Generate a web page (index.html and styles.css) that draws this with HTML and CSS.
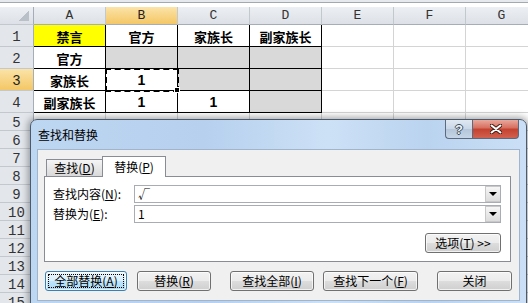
FILE: index.html
```html
<!DOCTYPE HTML>
<html lang="zh-CN">
<head>
	<meta charset="UTF-8">
	<title>查找和替换</title>
    <link rel="stylesheet" href="styles.css">
</head>
<body>
    <div class="strip"></div>
    <div class="sheet">
        <div class="row head">
            <div class="corner"></div>
            <div>A</div><div class="on">B</div><div>C</div><div>D</div><div>E</div><div>F</div><div>G</div>
        </div>
        <div class="row big">
            <div class="rh">1</div>
            <div class="k yellow">禁言</div><div class="k">官方</div><div class="k">家族长</div><div class="k">副家族长</div><div></div><div></div><div></div>
        </div>
        <div class="row big">
            <div class="rh">2</div>
            <div class="k">官方</div><div class="k g"></div><div class="k g"></div><div class="k g"></div><div></div><div></div><div></div>
        </div>
        <div class="row big">
            <div class="rh on">3</div>
            <div class="k">家族长</div><div class="k num sel">1</div><div class="k g"></div><div class="k g"></div><div></div><div></div><div></div>
        </div>
        <div class="row big">
            <div class="rh">4</div>
            <div class="k">副家族长</div><div class="k num">1</div><div class="k num">1</div><div class="k g"></div><div></div><div></div><div></div>
        </div>
        <div class="row"><div class="rh">5</div><div></div><div></div><div></div><div></div><div></div><div></div><div></div></div>
        <div class="row"><div class="rh">6</div><div></div><div></div><div></div><div></div><div></div><div></div><div></div></div>
        <div class="row"><div class="rh">7</div><div></div><div></div><div></div><div></div><div></div><div></div><div></div></div>
        <div class="row"><div class="rh">8</div><div></div><div></div><div></div><div></div><div></div><div></div><div></div></div>
        <div class="row"><div class="rh">9</div><div></div><div></div><div></div><div></div><div></div><div></div><div></div></div>
        <div class="row"><div class="rh">10</div><div></div><div></div><div></div><div></div><div></div><div></div><div></div></div>
        <div class="row"><div class="rh">11</div><div></div><div></div><div></div><div></div><div></div><div></div><div></div></div>
        <div class="row"><div class="rh">12</div><div></div><div></div><div></div><div></div><div></div><div></div><div></div></div>
        <div class="row"><div class="rh">13</div><div></div><div></div><div></div><div></div><div></div><div></div><div></div></div>
        <div class="row"><div class="rh">14</div><div></div><div></div><div></div><div></div><div></div><div></div><div></div></div>
        <div class="row"><div class="rh">15</div><div></div><div></div><div></div><div></div><div></div><div></div><div></div></div>
    </div>

    <div class="dialog">
        <div class="titlebar">
            <span class="title">查找和替换</span>
            <div class="caption">
                <span class="help">?</span>
                <span class="close">
                    <svg width="12" height="10" viewBox="0 0 12 10">
                        <path d="M1.5 1.5 L10.5 8.5 M10.5 1.5 L1.5 8.5" stroke="#4a1f17" stroke-width="4" stroke-linecap="round"/>
                        <path d="M1.5 1.5 L10.5 8.5 M10.5 1.5 L1.5 8.5" stroke="#fff" stroke-width="2" stroke-linecap="round"/>
                    </svg>
                </span>
            </div>
        </div>
        <div class="client">
            <div class="tabs">
                <span class="tab">查找(<u>D</u>)</span>
                <span class="tab active">替换(<u>P</u>)</span>
            </div>
            <div class="panel">
                <div class="field">
                    <label>查找内容(<u>N</u>):</label>
                    <div class="combo"><span>√</span><i class="drop"></i></div>
                </div>
                <div class="field second">
                    <label>替换为(<u>E</u>):</label>
                    <div class="combo"><span>1</span><i class="drop"></i></div>
                </div>
                <div class="opts">
                    <span class="btn options">选项(<u>T</u>) &gt;&gt;</span>
                </div>
            </div>
            <div class="buttons">
                <span class="btn default b1"><span class="focus">全部替换(<u>A</u>)</span></span>
                <span class="btn b2">替换(<u>R</u>)</span>
                <span class="btn b3">查找全部(<u>I</u>)</span>
                <span class="btn b4">查找下一个(<u>F</u>)</span>
                <span class="btn b5">关闭</span>
            </div>
        </div>
    </div>
</body>
</html>
```

FILE: styles.css
```css
body {
    margin: 0;
    width: 528px;
    height: 303px;
    overflow: hidden;
    position: relative;
    background: #fff;
    font-family: "Noto Sans CJK SC", sans-serif;
}
.strip {
    height: 7px;
    background: linear-gradient(#e6e9ee 0 2px, #a3a9b0 2px 3px, #fff 3px);
}
.row {
    display: flex;
    height: 18px;
}
.row.big {
    height: 22px;
}
.row > div {
    flex: none;
    width: 72px;
    box-sizing: border-box;
    border-right: 1px solid #d4d4d4;
    border-bottom: 1px solid #d4d4d4;
    display: flex;
    align-items: center;
    justify-content: center;
    font-size: 13px;
    font-weight: bold;
    color: #000;
}
.row > .rh,
.row > .corner {
    width: 34px;
    background: #e3e7ec;
    border-right-color: #a5adb8;
    border-bottom-color: #c3c8cf;
    font-family: "Liberation Mono", monospace;
    font-weight: normal;
    font-size: 14px;
    color: #333;
    padding-top: 2px;
}
.head > div {
    background: linear-gradient(#eceff3, #dde1e7);
    border-right-color: #c3c8cf;
    border-bottom-color: #a5adb8;
    font-family: "Liberation Mono", monospace;
    font-weight: normal;
    font-size: 13px;
    color: #333;
}
.row > .corner {
    padding: 0;
    background: linear-gradient(135deg, transparent 50%, #b9c0c8 50%) no-repeat right 4px bottom 3px / 10px 10px,
                linear-gradient(#eceff3, #dde1e7);
}
.row > .on {
    background: linear-gradient(#fbe3a8, #f4c765);
    color: #222;
}
.row > .k {
    border-right-color: #000;
    border-bottom-color: #000;
    padding-top: 1px;
}
.row > .yellow {
    background: #ffff00;
}
.row > .g {
    background: #d9d9d9;
}
.row > .num {
    font-family: "Liberation Sans", sans-serif;
    font-size: 14px;
}
.row > .sel {
    position: relative;
    outline: 2px dashed #000;
    outline-offset: -1px;
}
.sel::after {
    content: "";
    position: absolute;
    right: -3px;
    bottom: -3px;
    width: 4px;
    height: 4px;
    background: #000;
    border: 1px solid #fff;
}

/* dialog */
.dialog {
    position: absolute;
    left: 30px;
    top: 119px;
    width: 497px;
    height: 192px;
    box-sizing: border-box;
    border: 1px solid #4b5a6c;
    border-radius: 7px 7px 0 0;
    background: linear-gradient(to right, #bdd6f1, #b6d0ee 35%, #cde1f6 60%, #bad3ef 80%, #cbe0f6);
    box-shadow: 0 0 7px 2px rgba(0, 0, 0, .35);
}
.titlebar {
    height: 29px;
    display: flex;
    justify-content: space-between;
    align-items: flex-start;
    padding-left: 7px;
}
.title {
    font-size: 12px;
    line-height: 29px;
    color: #000;
}
.caption {
    display: flex;
    margin-right: 7px;
}
.help,
.close {
    height: 19px;
    box-sizing: border-box;
    border: 1px solid #5b6a7c;
    border-top: none;
    display: flex;
    align-items: center;
    justify-content: center;
}
.help {
    width: 27px;
    border-right: none;
    border-radius: 0 0 0 4px;
    background: linear-gradient(#dfe8f2, #c7d6e6 50%, #b5c6da 51%, #c6d6e8);
    font-family: "Liberation Sans", sans-serif;
    font-weight: bold;
    font-size: 13px;
    color: #eef2f6;
    text-shadow: 1px 0 #3c4b5c, -1px 0 #3c4b5c, 0 1px #3c4b5c, 0 -1px #3c4b5c;
}
.close {
    width: 47px;
    border-radius: 0 0 4px 0;
    background: linear-gradient(#e9a89c, #d66e5e 45%, #c3412f 50%, #d2614f);
}
.client {
    margin: 0 6px;
    height: 152px;
    box-sizing: border-box;
    border: 1px solid #a0b5cd;
    background: #f0f0f0;
    padding: 6px 8px 0 6px;
    font-size: 12px;
    color: #000;
}
.tabs {
    display: flex;
    align-items: flex-end;
    height: 20px;
    padding-left: 2px;
}
.tab {
    box-sizing: border-box;
    height: 17px;
    width: 57px;
    border: 1px solid #898c95;
    border-bottom: none;
    background: linear-gradient(#f5f5f5, #d9d9d9);
    display: flex;
    align-items: center;
    justify-content: center;
    line-height: 14px;
}
.tab.active {
    width: 64px;
    height: 21px;
    margin-left: -1px;
    margin-bottom: -1px;
    background: #fff;
    position: relative;
}
.panel {
    height: 86px;
    box-sizing: border-box;
    border: 1px solid #898c95;
    background: #fff;
    padding: 8px 9px 0 8px;
}
.field {
    display: flex;
    align-items: center;
}
.field.second {
    margin-top: 2px;
}
.field label {
    width: 81px;
    flex: none;
    line-height: 14px;
}
.combo {
    flex: 1;
    height: 18px;
    box-sizing: border-box;
    border: 1px solid #a9adb3;
    display: flex;
    align-items: center;
    padding-left: 3px;
    line-height: 14px;
}
.combo span {
    flex: 1;
}
.drop {
    width: 15px;
    height: 16px;
    box-sizing: border-box;
    border: 1px solid #c8c8c8;
    border-right: none;
    background: linear-gradient(#f6f6f6, #dcdcdc);
    display: flex;
    align-items: center;
    justify-content: center;
}
.drop::after {
    content: "";
    border-left: 4px solid transparent;
    border-right: 4px solid transparent;
    border-top: 4px solid #000;
}
.opts {
    display: flex;
    justify-content: flex-end;
    margin-top: 10px;
}
.btn {
    height: 20px;
    box-sizing: border-box;
    border: 1px solid #707070;
    border-radius: 3px;
    background: linear-gradient(#f2f2f2, #ebebeb 50%, #dddddd 51%, #cfcfcf);
    box-shadow: inset 0 0 0 1px rgba(255, 255, 255, .7);
    display: flex;
    align-items: center;
    justify-content: center;
    line-height: 14px;
    flex: none;
}
.options {
    width: 76px;
}
.buttons {
    display: flex;
    margin-top: 9px;
    padding-left: 1px;
}
.default {
    border-color: #3c7fb1;
    background: linear-gradient(#eaf6fd, #d9f0fc 50%, #bee6fd 51%, #a7d9f5);
}
.focus {
    box-sizing: border-box;
    width: 76px;
    height: 14px;
    border: 1px dotted #000;
    display: flex;
    align-items: center;
    justify-content: center;
}
.b1 { width: 82px; }
.b2 { width: 74px; margin-left: 10px; }
.b3 { width: 84px; margin-left: 19px; }
.b4 { width: 95px; margin-left: 9px; }
.b5 { width: 75px; margin-left: 19px; }
```
